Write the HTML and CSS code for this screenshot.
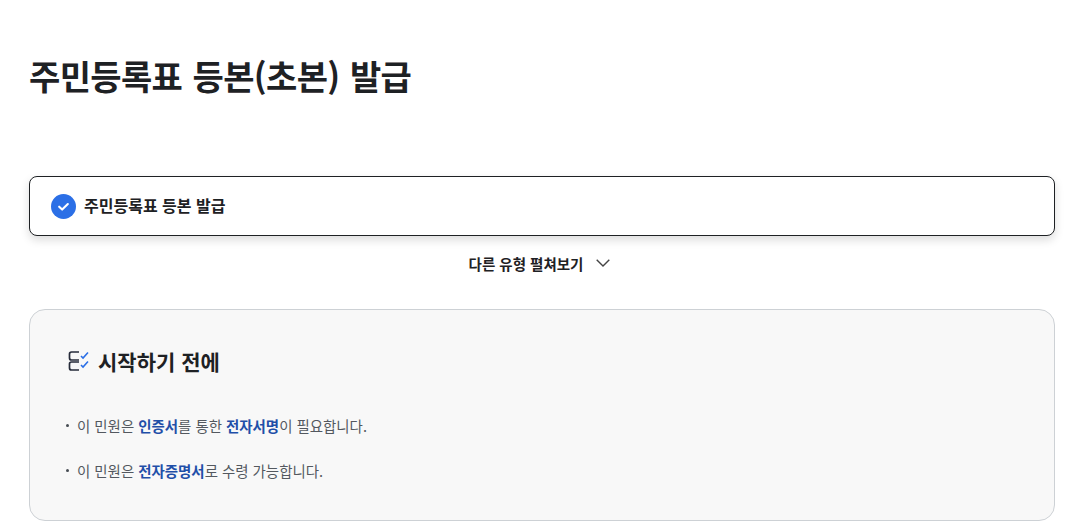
FILE: index.html
```html
<!DOCTYPE html>
<html lang="ko">
<head>
<meta charset="utf-8">
<title>주민등록표 등본(초본) 발급</title>
<link rel="stylesheet" href="styles.css">
</head>
<body>
<main class="page">
  <h1 class="title">주민등록표 등본(초본) 발급</h1>
  <div class="option">
    <svg class="check" viewBox="0 0 26 26" width="25" height="25"><circle cx="13" cy="13" r="13" fill="#2b6fe6"/><path d="M8.500 13.200l3.100 3 5.900-5.800" fill="none" stroke="#fff" stroke-width="2.200" stroke-linecap="round" stroke-linejoin="round"/></svg>
    <span class="option-label">주민등록표 등본 발급</span>
  </div>
  <div class="more">
    <span>다른 유형 펼쳐보기</span>
    <svg viewBox="0 0 14 8" width="14" height="8"><path d="M.7.700L7 7l6.300-6.300" fill="none" stroke="#444" stroke-width="1.400"/></svg>
  </div>
  <section class="panel">
    <h2 class="panel-title">
      <svg viewBox="0 0 22 20" width="22" height="20"><path d="M11 1H3.500a2 2 0 0 0-2 2v4a2 2 0 0 0 2 2H11M11 11H3.500a2 2 0 0 0-2 2v4a2 2 0 0 0 2 2H11" fill="none" stroke="#262b3a" stroke-width="1.700"/><path d="M13 5l2 2 5-5.500M13 14l2 2 5-5.500" fill="none" stroke="#2b6fe6" stroke-width="1.600"/></svg>
      <span>시작하기 전에</span>
    </h2>
    <ul class="notes">
      <li>이 민원은 <b>인증서</b>를 통한 <b>전자서명</b>이 필요합니다.</li>
      <li>이 민원은 <b>전자증명서</b>로 수령 가능합니다.</li>
    </ul>
  </section>
</main>
</body>
</html>
```
FILE: styles.css
```css
* { box-sizing: border-box; }
html, body { margin: 0; padding: 0; background: #fff; overflow: hidden; }
body { font-family: "Noto Sans CJK KR", "Noto Sans", sans-serif; color: #1e2124; }
.page { width: 1068px; height: 530px; padding: 52px 13px 0 29px; }
.title { margin: 0; font-size: 34px; line-height: 48px; font-weight: 700; letter-spacing: -0.640px; word-spacing: 1.500px; color: #1e2124; }
.option { display: flex; align-items: center; gap: 8px; height: 60px; margin-top: 76px; padding-left: 21px; border: 1px solid #1e2124; border-radius: 8px; background: #fff; box-shadow: 0 4px 10px rgba(0,0,0,.14); }
.option-label { font-size: 16px; line-height: 24px; font-weight: 700; position: relative; top: -1px; }
.more { display: flex; align-items: center; justify-content: center; gap: 13px; height: 22px; margin-top: 16px; padding-right: 5px; font-size: 14.500px; font-weight: 700; }
.panel { height: 212px; margin-top: 35px; padding: 33px 38px; background: #f8f8f8; border: 1px solid #cdd1d5; border-radius: 16px; }
.panel-title { display: flex; align-items: center; gap: 8px; margin: 0; font-size: 21px; line-height: 36px; font-weight: 700; }
.notes { list-style: none; margin: 35px 0 0 -2px; padding: 0; color: #53585f; font-size: 14.450px; line-height: 24px; }
.notes li { position: relative; padding-left: 11px; margin-bottom: 21px; }
.notes li::before { content: ""; position: absolute; left: 0; top: 10px; width: 3px; height: 3px; border-radius: 50%; background: #464c53; }
.notes b { color: #1f4fa8; font-weight: 700; }
```
